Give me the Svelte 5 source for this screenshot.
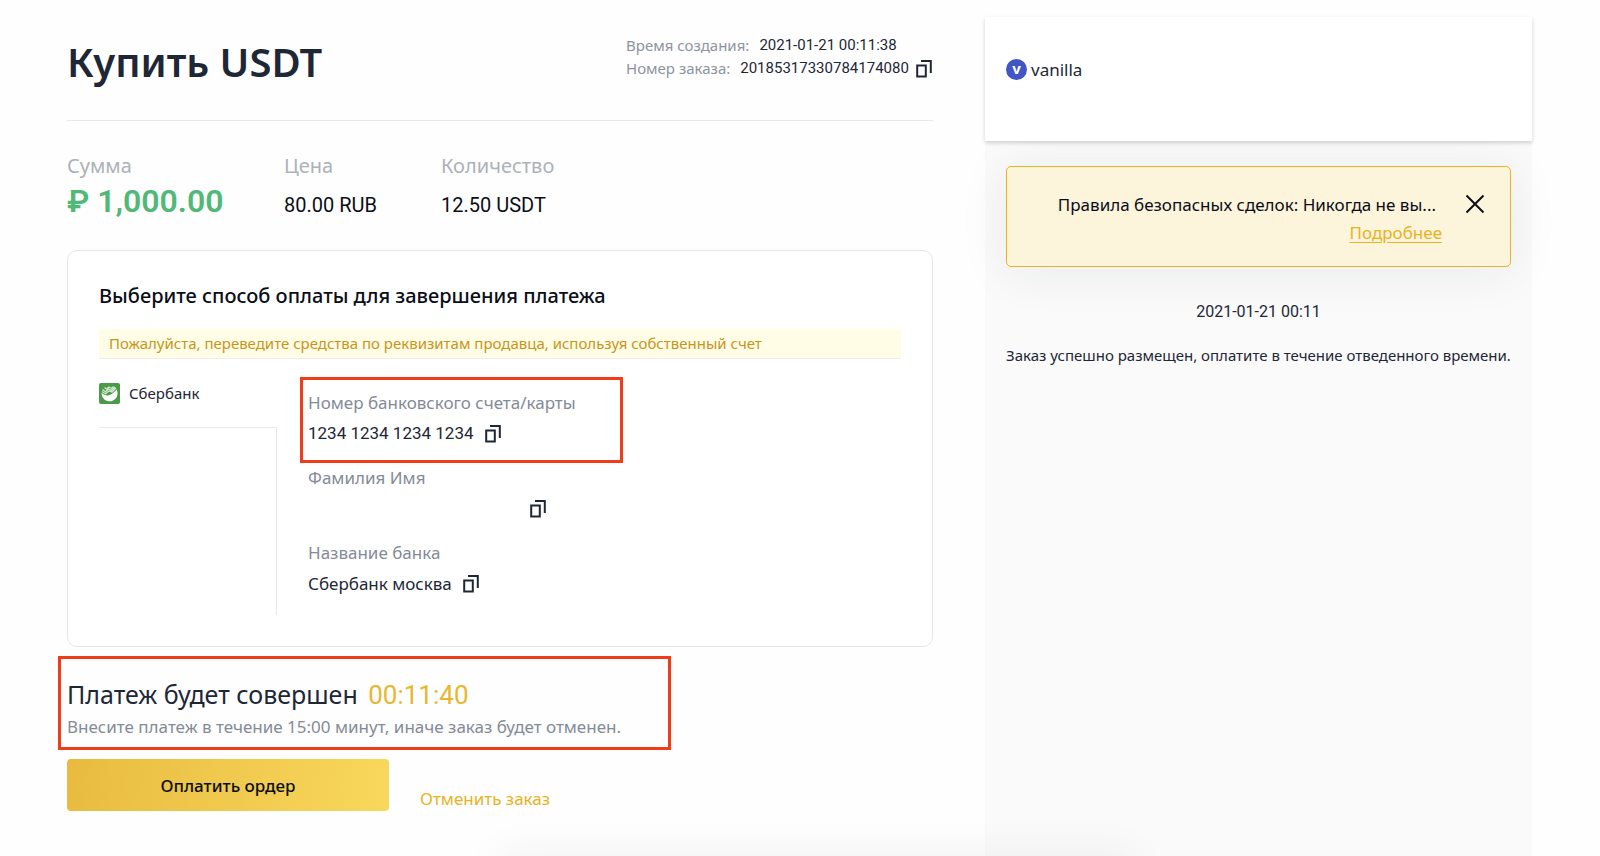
<script lang="ts">
	const order = {
		created: '2021-01-21 00:11:38',
		number: '20185317330784174080',
		amount: '₽ 1,000.00',
		price: '80.00 RUB',
		quantity: '12.50 USDT',
		timer: '00:11:40'
	};

	const fields = [
		{ label: 'Номер банковского счета/карты', value: '1234 1234 1234 1234', num: true, marked: true },
		{ label: 'Фамилия Имя', value: '' },
		{ label: 'Название банка', value: 'Сбербанк москва' }
	];

	function copy(text: string) {
		navigator.clipboard?.writeText(text);
	}
</script>

{#snippet copyIcon()}
	<svg width="16" height="18" viewBox="0 0 16 18" fill="none" stroke="currentColor" stroke-width="2">
		<path d="M1.2 5.4h8.6v11.2H1.2z" />
		<path d="M5 1h9.8v12" />
	</svg>
{/snippet}

<div class="page">
	<main>
		<header class="head">
			<h1>Купить USDT</h1>
			<div class="meta">
				<div class="metaRow">
					<span>Время создания:</span>
					<b class="num">{order.created}</b>
				</div>
				<div class="metaRow">
					<span>Номер заказа:</span>
					<b class="num">{order.number}</b>
					<button class="copy" aria-label="Копировать" onclick={() => copy(order.number)}>
						{@render copyIcon()}
					</button>
				</div>
			</div>
		</header>

		<dl class="totals">
			<div class="sum">
				<dt>Сумма</dt>
				<dd class="num green">{order.amount}</dd>
			</div>
			<div class="price">
				<dt>Цена</dt>
				<dd class="num">{order.price}</dd>
			</div>
			<div>
				<dt>Количество</dt>
				<dd class="num">{order.quantity}</dd>
			</div>
		</dl>

		<section class="card">
			<h2>Выберите способ оплаты для завершения платежа</h2>
			<p class="notice">
				Пожалуйста, переведите средства по реквизитам продавца, используя собственный счет
			</p>
			<div class="payment">
				<div class="methods">
					<div class="method">
						<svg width="21" height="21" viewBox="0 0 21 21">
							<rect width="21" height="21" rx="2" fill="#4a9a48" />
							<path d="M2.6 9.8c1.8 1.700 3.800 2.600 5.700 2.600 3.800 0 7-3.200 9.300-5.900a8 8 0 1 1-15 3.300z" fill="#fff" />
							<path
								d="M3.500 6.500l3 2.200 3-2.700 3 1.500 3.500-3.500M3 8.500l3.500 2.200 3.500-2.700 3 1 4-4M5.500 4.500l2 1.500 2.500-2 2.500 1.500 2-2"
								fill="none"
								stroke="#d5ead4"
								stroke-width="1.200"
							/>
						</svg>
						<span>Сбербанк</span>
					</div>
					<div class="methodsRest"></div>
				</div>
				<div class="fields">
					{#each fields as field}
						<div class="field" class:marked={field.marked}>
							<div class="label">{field.label}</div>
							<div class="value" class:num={field.num}>
								<span class:blank={!field.value}>{field.value}</span>
								<button class="copy" aria-label="Копировать" onclick={() => copy(field.value)}>
									{@render copyIcon()}
								</button>
							</div>
						</div>
					{/each}
				</div>
			</div>
		</section>

		<section class="deadline">
			<h3>Платеж будет совершен <span class="num">{order.timer}</span></h3>
			<p>Внесите платеж в течение 15:00 минут, иначе заказ будет отменен.</p>
		</section>

		<div class="actions">
			<button class="pay">Оплатить ордер</button>
			<a href="#cancel">Отменить заказ</a>
		</div>
	</main>

	<aside>
		<div class="seller">
			<span class="avatar">v</span>
			<span>vanilla</span>
		</div>
		<div class="chat">
			<div class="alert">
				<div class="alertText">
					<p>Правила безопасных сделок: Никогда не вы...</p>
					<a href="#rules">Подробнее</a>
				</div>
				<button class="close" aria-label="Закрыть">
					<svg width="20" height="20" viewBox="0 0 20 20" fill="none" stroke="currentColor" stroke-width="2">
						<path d="M1.500 1.500l17 17M18.500 1.500l-17 17" />
					</svg>
				</button>
			</div>
			<time class="num">2021-01-21 00:11</time>
			<p class="message">Заказ успешно размещен, оплатите в течение отведенного времени.</p>
		</div>
	</aside>
</div>

<div class="dock"></div>

<style>
	:global(body) {
		background-color: #fefefe;
	}

	.page {
		display: grid;
		grid-template-columns: minmax(0, 19fr) minmax(0, 12fr);
		column-gap: 52px;
		min-height: 100vh;
		padding: 0 68px 0 67px;
		box-sizing: border-box;
		overflow: hidden;
		color: #1e2736;
		font-family: 'Noto Sans', sans-serif;
		font-size: 17px;
	}

	h1,
	h2,
	h3,
	p,
	dl,
	dd {
		margin: 0;
	}

	button {
		border: none;
		padding: 0;
		background: none;
		color: inherit;
		font: inherit;
		cursor: pointer;
	}

	a {
		color: #e6b322;
		text-decoration: none;
	}

	svg {
		display: block;
	}

	.num {
		font-family: Roboto, sans-serif;
	}

	.head {
		display: flex;
		justify-content: space-between;
		height: 120px;
		border-bottom: 1px solid #e6e8ee;
	}

	h1 {
		padding-top: 35px;
		font-size: 40px;
		line-height: 54px;
		font-weight: 600;
	}

	.meta {
		width: 307px;
		padding-top: 34px;
		font-size: 15px;
		line-height: 23px;
	}

	.metaRow {
		display: flex;
		align-items: center;
		white-space: nowrap;
	}

	.metaRow span {
		margin-right: 10px;
		color: #8d94a0;
	}

	.metaRow b {
		margin-right: 7px;
		font-weight: 400;
	}

	.totals {
		display: flex;
		height: 129px;
	}

	.sum {
		width: 217px;
	}

	.price {
		width: 157px;
	}

	dt {
		padding-top: 30px;
		color: #adb1b8;
		font-size: 20px;
		line-height: 30px;
	}

	dd {
		color: #0b0e18;
		font-size: 20px;
		line-height: 48px;
	}

	.green {
		color: #50b978;
		font-size: 32px;
		line-height: 40px;
		font-weight: 600;
	}

	.card {
		border: 1px solid #e4e6ea;
		border-radius: 10px;
		padding: 31px;
		background-color: #ffffff;
	}

	h2 {
		color: #0b0e18;
		font-size: 20px;
		line-height: 28px;
		font-weight: 500;
		white-space: nowrap;
	}

	.notice {
		margin-top: 19px;
		border-bottom: 1px solid #ececec;
		padding: 0 10px;
		background-color: #fffde6;
		color: #c9941a;
		font-size: 15px;
		line-height: 29px;
		white-space: nowrap;
	}

	.payment {
		display: flex;
		gap: 23px;
	}

	.methods {
		width: 178px;
		font-size: 15px;
	}

	.method {
		display: flex;
		align-items: center;
		gap: 9px;
		height: 68px;
	}

	.methodsRest {
		height: 187px;
		border-top: 1px solid #e6e8ec;
		border-right: 1px solid #e6e8ec;
	}

	.fields {
		padding-top: 18px;
	}

	.field {
		height: 62px;
		margin-bottom: 13px;
		padding-left: 8px;
	}

	.marked {
		width: 312px;
		margin-bottom: 0;
		border: 3px solid #f03c18;
		padding: 8px 0 10px 5px;
	}

	.label {
		color: #848b97;
		line-height: 29px;
		white-space: nowrap;
	}

	.value {
		display: flex;
		align-items: center;
		gap: 11px;
		min-height: 33px;
		line-height: 33px;
	}

	.blank {
		width: 211px;
	}

	.deadline {
		box-sizing: border-box;
		width: 613px;
		margin: 9px 0 0 -9px;
		border: 3px solid #f03c18;
		padding: 17px 6px 8px;
	}

	h3 {
		font-size: 25px;
		line-height: 36px;
		font-weight: 400;
		white-space: nowrap;
	}

	h3 span {
		margin-left: 4px;
		color: #e8b730;
		font-size: 26px;
	}

	.deadline p {
		margin-top: 2px;
		color: #848b97;
		line-height: 24px;
		white-space: nowrap;
	}

	.actions {
		display: flex;
		align-items: flex-end;
		gap: 31px;
		margin-top: 9px;
	}

	.pay {
		width: 322px;
		height: 52px;
		border-radius: 4px;
		background: linear-gradient(100deg, #e8bb40, #f8d85c);
		color: #0b0e18;
		font-weight: 500;
	}

	.actions a {
		line-height: 24px;
	}

	aside {
		margin-top: 17px;
		background-color: #fafafa;
	}

	.seller {
		position: relative;
		display: flex;
		align-items: center;
		gap: 4px;
		height: 124px;
		box-sizing: border-box;
		padding: 0 21px 20px;
		background-color: #ffffff;
		box-shadow: 0 2px 4px rgba(30, 39, 54, 0.2);
	}

	.avatar {
		width: 21px;
		height: 21px;
		border-radius: 50%;
		background-color: #4354c4;
		color: #ffffff;
		font-size: 15px;
		line-height: 19px;
		font-weight: 700;
		text-align: center;
	}

	.chat {
		display: flex;
		flex-direction: column;
		align-items: center;
		padding: 25px 21px;
	}

	.alert {
		display: flex;
		justify-content: flex-end;
		align-items: flex-start;
		align-self: stretch;
		gap: 23px;
		height: 101px;
		box-sizing: border-box;
		border: 1px solid #e6b322;
		border-radius: 5px;
		padding: 24px 25px 0 0;
		background-color: #fdf4dc;
		box-shadow: 0 4px 50px rgba(30, 39, 54, 0.08);
	}

	.alertText {
		color: #0b0e18;
		line-height: 28px;
		text-align: right;
		white-space: nowrap;
	}

	.alertText p {
		padding-right: 6px;
	}

	.alertText a {
		text-decoration: underline;
		text-underline-offset: 3px;
	}

	.close {
		margin-top: 3px;
		color: #0b0e18;
	}

	time {
		margin-top: 33px;
		font-size: 16px;
		line-height: 24px;
	}

	.message {
		margin-top: 19px;
		font-size: 15px;
		line-height: 24px;
		white-space: nowrap;
	}

	/* shadow of the bar docked just under the window edge */
	.dock {
		position: fixed;
		bottom: -20px;
		left: 31%;
		right: 29%;
		height: 20px;
		border-radius: 20px;
		box-shadow: 0 0 40px rgba(0, 0, 0, 0.08);
		pointer-events: none;
	}
</style>
